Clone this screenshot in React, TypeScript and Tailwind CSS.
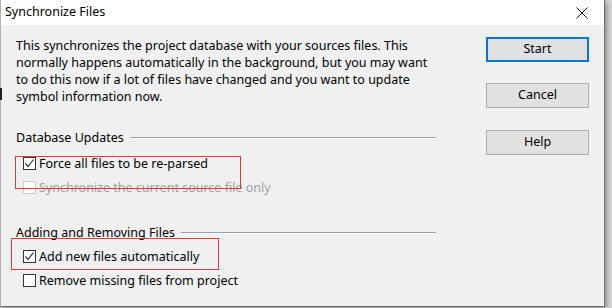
import React from "react";

const font = { fontFamily: '"Noto Sans", "Microsoft YaHei", sans-serif' };

function Check({ checked, disabled }: { checked?: boolean; disabled?: boolean }) {
  return (
    <div
      className={
        "w-[13px] h-[13px] border bg-white flex items-center justify-center " +
        (disabled ? "border-[#cccccc]" : "border-[#333333]")
      }
    >
      {checked && (
        <svg width="11" height="11" viewBox="0 0 11 11">
          <path d="M1.5 5.5 L4 8.5 L9.5 1.5" fill="none" stroke="#333" strokeWidth="1.2" />
        </svg>
      )}
    </div>
  );
}

function Row({ label, checked, disabled }: { label: string; checked?: boolean; disabled?: boolean }) {
  return (
    <div className="h-[24px] flex items-center pl-[7px] gap-[3px]">
      <Check checked={checked} disabled={disabled} />
      <span className={"text-[12.5px] leading-[17px] whitespace-nowrap " + (disabled ? "text-[#a0a0a0]" : "text-black")}>
        {label}
      </span>
    </div>
  );
}

function Group({ title }: { title: string }) {
  return (
    <div className="h-[17px] flex items-center">
      <span className="text-[12.5px] leading-[17px] text-black whitespace-nowrap">{title}</span>
      <div className="flex-1 ml-[6px] flex flex-col">
        <div className="h-px bg-[#a0a0a0]" />
        <div className="h-px bg-white" />
      </div>
    </div>
  );
}

function Btn({ label, primary, extra }: { label: string; primary?: boolean; extra?: string }) {
  return (
    <div
      className={
        "w-[103px] h-[25px] bg-[#e1e1e1] flex items-center justify-center text-[12.5px] text-black " +
        (primary ? "border-2 border-[#0078d7] " : "border border-[#adadad] ") +
        (extra || "")
      }
    >
      {label}
    </div>
  );
}

export default function App() {
  return (
    <div className="w-[612px] h-[308px] bg-[#d6d6d6] relative overflow-hidden" style={font}>
      <div className="w-[605px] h-[307px] bg-[#f0f0f0] border-l border-l-[#b0b0b0] border-r border-r-[#6e6e6e] border-b border-b-[#6e6e6e] shadow-[2px_2px_5px_rgba(0,0,0,0.35)] flex flex-col">
        <div className="h-[25px] bg-white flex items-center justify-between pl-[4px] pr-[16px]">
          <span className="text-[12.5px] text-black">Synchronize Files</span>
          <svg width="12" height="12" viewBox="0 0 12 12">
            <path d="M0.5 0.5 L11.5 11.5 M11.5 0.5 L0.5 11.5" stroke="#111" strokeWidth="1" />
          </svg>
        </div>
        <div className="flex flex-1">
          <div className="w-[435px] pl-[15px] pt-[12px]">
            <div className="text-[12.5px] leading-[17px] text-black whitespace-nowrap">
              <div>This synchronizes the project database with your sources files. This</div>
              <div>normally happens automatically in the background, but you may want</div>
              <div>to do this now if a lot of files have changed and you want to update</div>
              <div>symbol information now.</div>
            </div>
            <div className="mt-[24px]">
              <Group title="Database Updates" />
              <div className="mt-[5px]">
                <Row label="Force all files to be re-parsed" checked />
                <Row label="Synchronize the current source file only" disabled />
              </div>
            </div>
            <div className="mt-[25px]">
              <Group title="Adding and Removing Files" />
              <div className="mt-[3px]">
                <Row label="Add new files automatically" checked />
                <Row label="Remove missing files from project" />
              </div>
            </div>
          </div>
          <div className="ml-[50px] pt-[12px] flex flex-col gap-[21px]">
            <Btn label="Start" primary />
            <Btn label="Cancel" />
            <Btn label="Help" extra="mt-[1px]" />
          </div>
        </div>
      </div>
      <div className="absolute left-[15px] top-[156px] w-[226px] h-[33px] border border-[#e53935]" />
      <div className="absolute left-[11px] top-[238px] w-[208px] h-[32px] border border-[#e53935]" />
      <div className="absolute left-0 top-[88px] w-[2px] h-[12px] bg-[#222]" />
    </div>
  );
}
